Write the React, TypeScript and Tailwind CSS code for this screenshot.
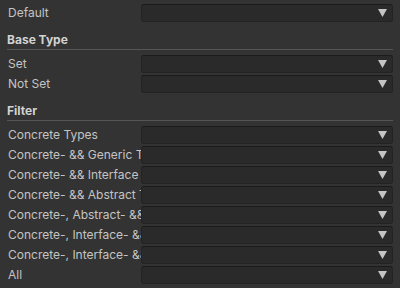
const font = { fontFamily: "Inter, 'Noto Sans', sans-serif" }

type RowProps = { label: string }

function Dropdown() {
  return (
    <div className="flex-1 h-[18px] flex items-center justify-end pr-[5px] rounded-[3px] bg-[#2a2a2a] border border-[#232323] border-t-[#1b1b1b]">
      <svg width="9" height="8" viewBox="0 0 9 8">
        <polygon points="0,0 9,0 4.5,8" fill="#c4c4c4" />
      </svg>
    </div>
  )
}

function Row({ label }: RowProps) {
  return (
    <div className="flex items-center h-[18px]">
      <div className="w-[134px] shrink-0 overflow-hidden whitespace-nowrap text-[12px] leading-[18px] text-[#c4c4c4] pl-[1px]">
        {label}
      </div>
      <Dropdown />
    </div>
  )
}

function Header({ title }: { title: string }) {
  return (
    <div className="mt-[10px] mb-[5px]">
      <div className="h-[16px] leading-[16px] text-[12px] font-bold text-[#d2d2d2]">{title}</div>
      <div className="mt-[1px] h-px bg-[#555555]" />
    </div>
  )
}

export default function App() {
  return (
    <div className="w-[400px] h-[288px] bg-[#333333] px-[7px] pt-[4px] overflow-hidden" style={font}>
      <Row label="Default" />

      <Header title="Base Type" />
      <div className="flex flex-col gap-[2px]">
        <Row label="Set" />
        <Row label="Not Set" />
      </div>

      <Header title="Filter" />
      <div className="flex flex-col gap-[2px]">
        <Row label="Concrete Types" />
        <Row label="Concrete- && Generic Types" />
        <Row label="Concrete- && Interface Types" />
        <Row label="Concrete- && Abstract Types" />
        <Row label="Concrete-, Abstract- && Generic Types" />
        <Row label="Concrete-, Interface- && Generic Types" />
        <Row label="Concrete-, Interface- && Abstract Types" />
        <Row label="All" />
      </div>
    </div>
  )
}
